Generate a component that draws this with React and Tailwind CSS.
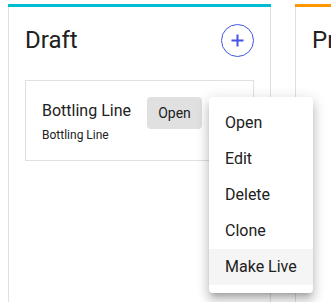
import React from 'react';

const menuItems = ['Open', 'Edit', 'Delete', 'Clone', 'Make Live'];

const Column = ({ title, barClass, children }) => (
    <div className="flex flex-col w-[263px] shrink-0">
        <div className={`h-[3px] ${barClass}`} />
        <div className="h-[400px] border-x border-[#e0e0e0] px-4 pt-4">
            <div className="flex items-center justify-between h-[35px] mb-[22px]">
                <h2 className="text-[24px] leading-[35px] text-[#212121] whitespace-nowrap">{title}</h2>
                <button className="w-[33px] h-[33px] shrink-0 rounded-full border border-[#4355e6] flex items-center justify-center text-[#4355e6]">
                    <svg width="13" height="13" viewBox="0 0 13 13" fill="none" stroke="currentColor" strokeWidth="2">
                        <path d="M6.5 0.5v12M0.5 6.5h12" />
                    </svg>
                </button>
            </div>
            {children}
        </div>
    </div>
);

const App = () => {
    return (
        <div
            className="relative h-[302px] w-[331px] overflow-hidden bg-white pt-1 pl-2"
            style={{ fontFamily: 'Roboto, "Liberation Sans", sans-serif' }}
        >
            <div className="flex gap-6">
                <Column title="Draft" barClass="bg-[#00bcd4]">
                    <div className="border border-[#e0e0e0] px-4 pt-4 pb-4">
                        <div className="flex items-start gap-4">
                            <div className="pt-[2px]">
                                <div className="text-[16px] leading-6 text-[#212121]">Bottling Line</div>
                                <div className="text-[12px] leading-[18px] mt-[3px] text-[#212121]">Bottling Line</div>
                            </div>
                            <button className="w-[55px] h-[32px] rounded bg-[#e0e0e0] text-[14px] text-[#212121]">
                                Open
                            </button>
                        </div>
                    </div>
                </Column>
                <Column title="Production" barClass="bg-[#ff9800]" />
            </div>

            <div className="absolute left-[209px] top-[97px] w-[104px] bg-white rounded py-2 shadow-[0_5px_5px_-3px_rgba(0,0,0,0.2),0_8px_10px_1px_rgba(0,0,0,0.14),0_3px_14px_2px_rgba(0,0,0,0.12)]">
                {menuItems.map((item) => (
                    <div
                        key={item}
                        className={`h-9 flex items-center px-4 text-[16px] text-[#212121] ${item === 'Make Live' ? 'bg-[#f5f5f5]' : ''}`}
                    >
                        {item}
                    </div>
                ))}
            </div>
        </div>
    );
};

export default App;
